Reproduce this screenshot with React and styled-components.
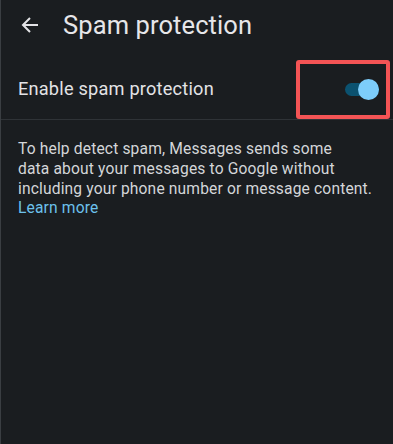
import React from 'react'
import styled, { createGlobalStyle } from 'styled-components'

const GlobalStyle = createGlobalStyle`
  body {
    margin: 0;
    background: #1a1d20;
    font-family: Roboto, 'Noto Sans', sans-serif;
  }
`

const Screen = styled.div`
  width: 393px;
  height: 444px;
  box-sizing: border-box;
  background: #1a1d20;
  border-left: 1px solid #3a3e42;
  color: #e3e3e6;
`

const Header = styled.div`
  display: flex;
  align-items: center;
  height: 50px;
  padding-left: 20px;
  gap: 24px;

  h1 {
    margin: 0;
    font-size: 25.5px;
    font-weight: 400;
    letter-spacing: 0.1px;
    color: #e6e6e9;
  }
`

const BackButton = styled.button`
  border: 0;
  background: none;
  padding: 0;
  display: flex;
  color: #e3e3e6;
`

const Row = styled.div`
  display: flex;
  align-items: center;
  justify-content: space-between;
  height: 70px;
  padding-left: 17px;
  border-bottom: 1px solid #2f3337;
  box-sizing: border-box;

  span {
    margin-top: 7px;
    font-size: 18.2px;
    color: #e3e3e6;
    letter-spacing: 0.2px;
  }
`

const Highlight = styled.div`
  display: flex;
  align-items: center;
  justify-content: flex-end;
  width: 94px;
  height: 59px;
  box-sizing: border-box;
  border: 4px solid #f45455;
  border-radius: 3px;
  padding-right: 7px;
  margin-top: 10px;
  margin-right: 3px;
`

const Switch = styled.div`
  position: relative;
  width: 34px;
  height: 13px;
  border-radius: 7px;
  background: ${(p) => (p.on ? '#0b5270' : '#444')};

  &::after {
    content: '';
    position: absolute;
    top: -4px;
    right: 0;
    width: 21px;
    height: 21px;
    border-radius: 50%;
    background: ${(p) => (p.on ? '#7dcdfb' : '#bbb')};
  }
`

const Info = styled.p`
  margin: 0;
  padding: 20px 8px 0 17px;
  font-size: 15.6px;
  line-height: 19.8px;
  letter-spacing: 0.15px;
  color: #d4d6d9;
  white-space: nowrap;

  a {
    color: #6cc1ec;
    text-decoration: none;
  }
`

export default function App() {
  return (
    <>
      <GlobalStyle />
      <Screen>
        <Header>
          <BackButton aria-label='Back'>
            <svg width='18' height='18' viewBox='0 0 18 18' fill='none' stroke='currentColor' strokeWidth='2'>
              <path d='M17 9H2M9 2L2 9l7 7' />
            </svg>
          </BackButton>
          <h1>Spam protection</h1>
        </Header>
        <Row>
          <span>Enable spam protection</span>
          <Highlight>
            <Switch on />
          </Highlight>
        </Row>
        <Info>
          To help detect spam, Messages sends some
          <br />
          data about your messages to Google without
          <br />
          including your phone number or message content.
          <br />
          <a href=''>Learn more</a>
        </Info>
      </Screen>
    </>
  )
}
